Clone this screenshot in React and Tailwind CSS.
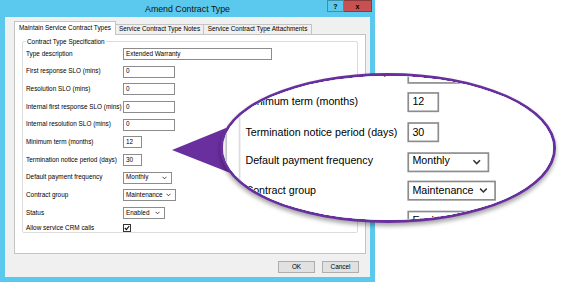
import React from 'react'

function Chevron() {
  return (
    <svg width="5" height="4" viewBox="0 0 5 4" className="shrink-0">
      <path d="M0.5 0.8 L2.5 2.8 L4.5 0.8" fill="none" stroke="#333" strokeWidth="0.9" />
    </svg>
  )
}

function TextBox({ value, w }) {
  return (
    <div
      className={`flex h-[12px] items-center border border-[#8c8c8c] bg-white pl-[2px] leading-none ${w}`}
    >
      {value}
    </div>
  )
}

function Select({ value, w }) {
  return (
    <div
      className={`flex h-[12px] items-center justify-between border border-[#8c8c8c] bg-white pl-[2px] pr-[4px] leading-none ${w}`}
    >
      <span>{value}</span>
      <Chevron />
    </div>
  )
}

const rows = [
  ['Type description', <TextBox value="Extended Warranty" w="w-[149px]" />],
  ['First response SLO (mins)', <TextBox value="0" w="w-[52px]" />],
  ['Resolution SLO (mins)', <TextBox value="0" w="w-[52px]" />],
  ['Internal first response SLO (mins)', <TextBox value="0" w="w-[52px]" />],
  ['Internal resolution SLO (mins)', <TextBox value="0" w="w-[52px]" />],
  ['Minimum term (months)', <TextBox value="12" w="w-[19px]" />],
  ['Termination notice period (days)', <TextBox value="30" w="w-[19px]" />],
  ['Default payment frequency', <Select value="Monthly" w="w-[49px]" />],
  ['Contract group', <Select value="Maintenance" w="w-[53px]" />],
  ['Status', <Select value="Enabled" w="w-[42px]" />],
]

function Dialog() {
  return (
    <div className="flex h-[282px] w-[375px] flex-col bg-[#5bc9ee] font-['Liberation_Sans',Arial,sans-serif] text-[6.4px] text-black">
      {/* title bar */}
      <div className="flex h-[17px] items-start">
        <div className="flex-1 pl-[48px] pt-[4px] text-center text-[8.8px] leading-[10px] text-[#111]">
          Amend Contract Type
        </div>
        <div className="mr-[3px] flex">
          <div className="flex h-[12px] w-[17px] items-center justify-center border border-[#3f8eaa] bg-[#5bc9ee] text-[7px] font-bold leading-none">
            ?
          </div>
          <div className="flex h-[12px] w-[28px] items-center justify-center border border-l-0 border-[#8a3a3a] bg-[#c75050] text-[7px] font-bold leading-none">
            x
          </div>
        </div>
      </div>

      {/* client area */}
      <div className="mb-[5px] ml-[5px] mr-[5px] flex flex-1 flex-col bg-[#f0f0f0] pb-[4px] pl-[9px] pr-[4px] pt-[4px]">
        <div className="flex h-[13px] items-end">
          <div className="relative z-10 -mb-px flex h-[14px] w-[102px] items-center justify-center border border-b-0 border-[#c4c4c4] bg-white leading-none">
            Maintain Service Contract Types
          </div>
          <div className="flex h-[10px] w-[88px] items-center justify-center border border-b-0 border-l-0 border-[#c4c4c4] bg-[#f0f0f0] leading-none">
            Service Contract Type Notes
          </div>
          <div className="flex h-[10px] w-[108px] items-center justify-center border border-b-0 border-l-0 border-[#c4c4c4] bg-[#f0f0f0] leading-none">
            Service Contract Type Attachments
          </div>
        </div>

        <div className="h-[220px] border border-[#c4c4c4] bg-white px-[7px] pt-[6px]">
          <div className="relative h-[192px] rounded-[2px] border border-[#dcdcdc] pl-[3px] pt-[3px]">
            <div className="absolute left-[3px] top-[-4px] bg-white px-px leading-[7px]">
              Contract Type Specification
            </div>
            {rows.map(([label, control]) => (
              <div key={label} className="grid h-[17.7px] grid-cols-[97px_1fr] items-center">
                <span className="leading-none">{label}</span>
                {control}
              </div>
            ))}
            <div className="grid h-[12px] grid-cols-[97px_1fr] items-center">
              <span className="leading-none">Allow service CRM calls</span>
              <div className="flex h-[8px] w-[8px] items-center justify-center border border-[#333] bg-white">
                <svg width="6" height="6" viewBox="0 0 6 6">
                  <path d="M0.8 3 L2.4 4.6 L5.2 1" fill="none" stroke="#111" strokeWidth="1.2" />
                </svg>
              </div>
            </div>
          </div>
        </div>

        <div className="mt-[7px] flex justify-end gap-[7px] pr-[7px]">
          <div className="flex h-[12px] w-[37px] items-center justify-center border border-[#adadad] bg-[#e1e1e1] leading-none">
            OK
          </div>
          <div className="flex h-[12px] w-[37px] items-center justify-center border border-[#adadad] bg-[#e1e1e1] leading-none">
            Cancel
          </div>
        </div>
      </div>
    </div>
  )
}

export default function App() {
  return (
    <div className="relative h-[282px] w-[564px] overflow-hidden bg-white">
      <Dialog />

      {/* callout pointer */}
      <svg className="pointer-events-none absolute left-0 top-0" width="564" height="282">
        <polygon points="172,150 226,128 238,176" fill="#6a2f9e" />
      </svg>

      {/* magnifier */}
      <div className="absolute left-[220px] top-[73px] h-[150px] w-[336px] overflow-hidden rounded-[50%] border-[3px] border-[#6a2f9e] bg-white shadow-[0_3px_4px_rgba(0,0,0,0.35)]">
        <div className="absolute left-0 top-0 origin-top-left translate-x-[-21px] translate-y-[-211px] scale-[1.67]">
          <Dialog />
        </div>
      </div>
    </div>
  )
}
